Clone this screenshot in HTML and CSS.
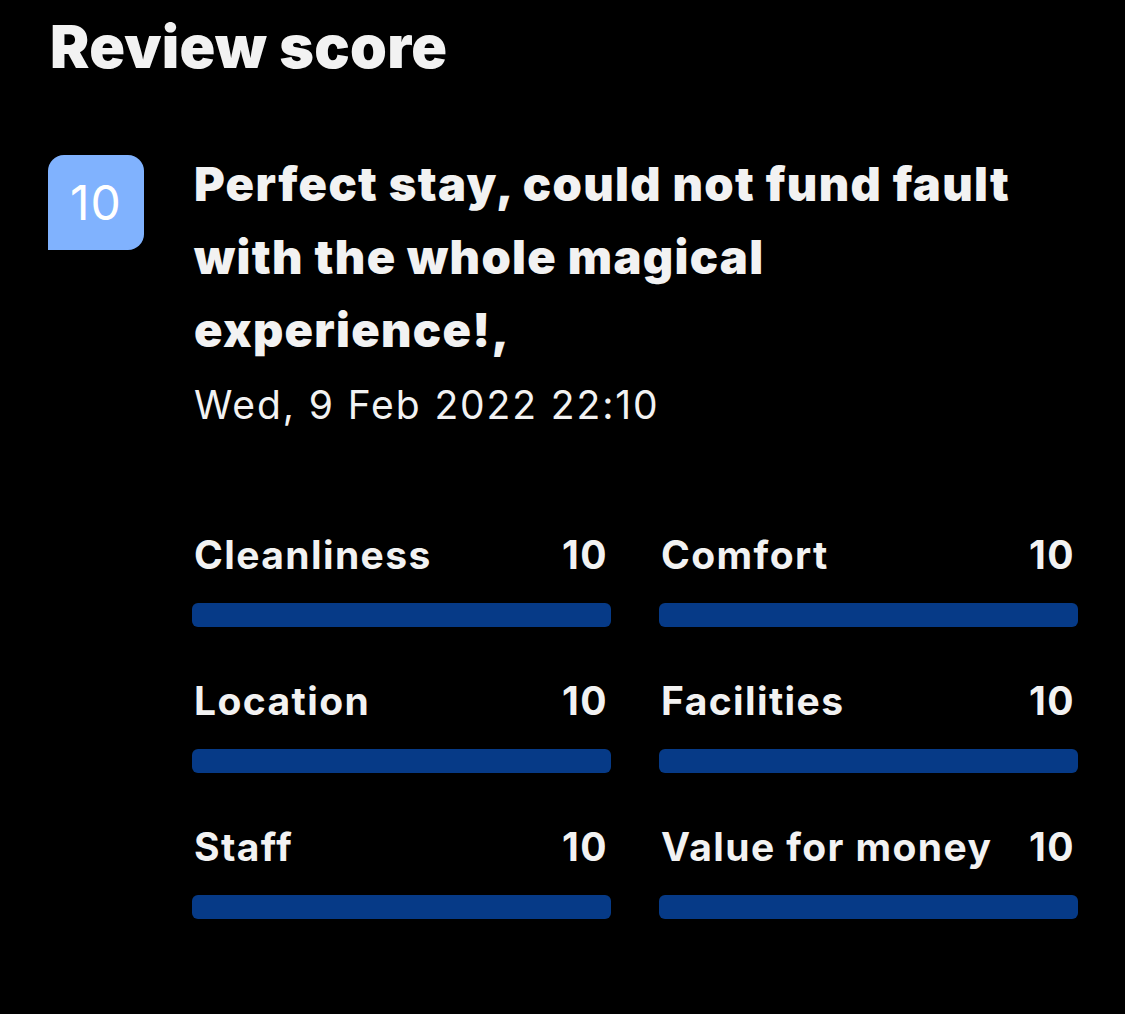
FILE: index.html
```html
<!DOCTYPE html>
<html lang="en">
<head>
    <meta charset="UTF-8">
    <meta name="viewport" content="width=device-width, initial-scale=1.0">
    <title>Review score</title>
    <link rel="stylesheet" href="styles.css">
</head>
<body>
    <div class="container">
        <h1 class="title">Review score</h1>
        <div class="review">
            <div class="badge">10</div>
            <div class="review-body">
                <h2 class="headline">Perfect stay, could not fund fault with the whole magical experience!,</h2>
                <p class="date">Wed, 9 Feb 2022 22:10</p>
                <div class="scores">
                    <div class="score">
                        <div class="score-head"><span>Cleanliness</span><span>10</span></div>
                        <div class="bar"><div class="fill" style="width: 100%"></div></div>
                    </div>
                    <div class="score">
                        <div class="score-head"><span>Comfort</span><span>10</span></div>
                        <div class="bar"><div class="fill" style="width: 100%"></div></div>
                    </div>
                    <div class="score">
                        <div class="score-head"><span>Location</span><span>10</span></div>
                        <div class="bar"><div class="fill" style="width: 100%"></div></div>
                    </div>
                    <div class="score">
                        <div class="score-head"><span>Facilities</span><span>10</span></div>
                        <div class="bar"><div class="fill" style="width: 100%"></div></div>
                    </div>
                    <div class="score">
                        <div class="score-head"><span>Staff</span><span>10</span></div>
                        <div class="bar"><div class="fill" style="width: 100%"></div></div>
                    </div>
                    <div class="score">
                        <div class="score-head"><span>Value for money</span><span>10</span></div>
                        <div class="bar"><div class="fill" style="width: 100%"></div></div>
                    </div>
                </div>
            </div>
        </div>
    </div>
</body>
</html>
```

FILE: styles.css
```css
body {
    margin: 0;
    background-color: #000;
    color: #f2f2f2;
    font-family: Inter, "Noto Sans", sans-serif;
}
.container {
    padding: 12px 47px 0 48px;
}
.title {
    margin: 0 0 73px 2px;
    font-size: 59px;
    font-weight: 900;
    line-height: 70px;
    letter-spacing: 0.3px;
}
.review {
    display: flex;
    gap: 50px;
}
.badge {
    flex: none;
    width: 96px;
    height: 95px;
    display: flex;
    align-items: center;
    justify-content: center;
    background-color: #80b2fe;
    border-radius: 16px 16px 16px 0;
    color: #fff;
    font-size: 48px;
    font-weight: 400;
    letter-spacing: 1px;
}
.review-body {
    flex: 1;
}
.headline {
    max-width: 860px;
    margin: -8px 0 0;
    font-size: 47px;
    font-weight: 900;
    line-height: 73px;
    letter-spacing: 1.3px;
}
.date {
    margin: 14px 0 100px;
    font-size: 39px;
    line-height: 50px;
    letter-spacing: 1.9px;
}
.scores {
    display: grid;
    grid-template-columns: 1fr 1fr;
    column-gap: 48px;
    row-gap: 49px;
    margin-left: -2px;
}
.score-head {
    display: flex;
    justify-content: space-between;
    font-size: 39px;
    font-weight: 700;
    line-height: 50px;
    letter-spacing: 1.4px;
    padding: 0 3px 0 2px;
}
.bar {
    margin-top: 23px;
    height: 24px;
    border-radius: 6px;
    background-color: #1b1b1b;
    overflow: hidden;
}
.fill {
    height: 100%;
    background-color: #063a87;
}
```
